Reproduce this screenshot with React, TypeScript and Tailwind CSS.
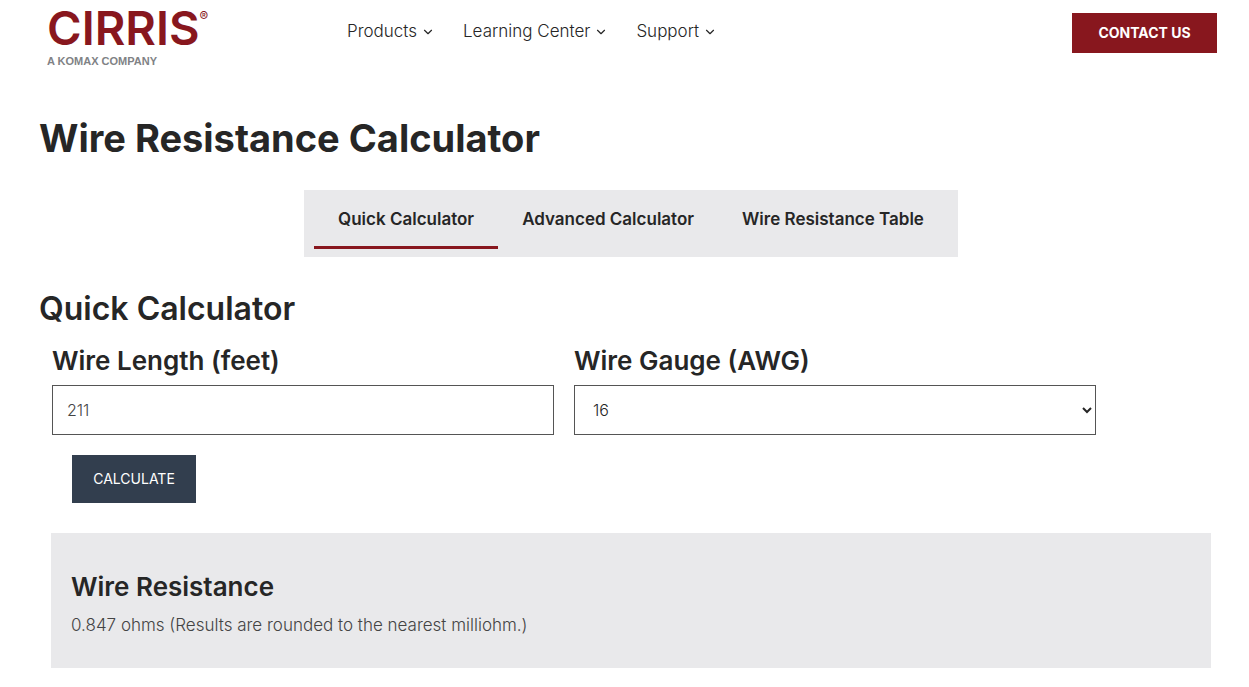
import { useState } from 'react'
import type { FormEvent } from 'react'
import { ChevronDown } from 'lucide-react'

const NAV = ['Products', 'Learning Center', 'Support']
const TABS = ['Quick Calculator', 'Advanced Calculator', 'Wire Resistance Table']
const GAUGES = [10, 12, 14, 16, 18, 20, 22, 24, 26, 28, 30]

// copper, ohms per 1000 ft at the given AWG
function ohmsPerKft(gauge: number) {
  return 4.0144 * Math.pow(10, (gauge - 16) / 10)
}

function Logo() {
  return (
    <a href="#" aria-label="Cirris, a Komax company" className="block w-[300px] shrink-0">
      <span className="flex items-start text-[#88171e]">
        <span className="text-[47px] leading-[34px] font-semibold">CIRRIS</span>
        <span className="text-[13px] leading-[10px]">®</span>
      </span>
      <span className="mt-2 block font-['Liberation_Sans',sans-serif] text-[11px] leading-4 font-bold text-[#808285]">
        A KOMAX COMPANY
      </span>
    </a>
  )
}

export default function App() {
  const [tab, setTab] = useState(TABS[0])
  const [length, setLength] = useState('211')
  const [gauge, setGauge] = useState(16)
  const [result, setResult] = useState('0.847')

  const calculate = (e: FormEvent) => {
    e.preventDefault()
    setResult(((Number(length) / 1000) * ohmsPerKft(gauge)).toFixed(3))
  }

  return (
    <div className="bg-white font-[Inter,sans-serif] text-[#262626]">
      <header className="flex items-start pt-[11px] pr-8 pl-[47px]">
        <Logo />
        <nav className="flex flex-1 gap-7 pt-2">
          {NAV.map(item => (
            <a key={item} href="#" className="flex items-center gap-1 text-[17px] leading-6 font-light whitespace-nowrap">
              {item}
              <ChevronDown size={14} strokeWidth={2} className="mt-[2px]" />
            </a>
          ))}
        </nav>
        <a href="#" className="mt-[2px] flex h-10 w-[145px] items-center justify-center bg-[#88171e] text-sm font-bold text-white">
          CONTACT US
        </a>
      </header>

      <main className="pr-[38px] pl-[39px]">
        <h1 className="mt-[45px] text-[38px] leading-[48px] font-bold">Wire Resistance Calculator</h1>

        <div className="mt-7 ml-3 flex justify-center">
          <div role="tablist" className="flex h-[67px] bg-[#e9e9eb] p-[10px]">
            {TABS.map(t => (
              <button
                key={t}
                type="button"
                role="tab"
                aria-selected={t === tab}
                onClick={() => setTab(t)}
                className={
                  t === tab
                    ? 'h-[49px] border-b-3 border-[#88171e] px-6 pb-[6px] text-[17px] font-semibold'
                    : 'h-[49px] border-b-3 border-transparent px-6 pb-[6px] text-[17px] font-semibold'
                }
              >
                {t}
              </button>
            ))}
          </div>
        </div>

        <h2 className="mt-8 text-[32px] leading-10 font-semibold">Quick Calculator</h2>

        <form onSubmit={calculate} className="mt-4 ml-[13px]">
          <div className="flex gap-5 pr-[115px]">
            <div className="flex-[502]">
              <label htmlFor="length" className="block text-[26px] leading-8 font-semibold">
                Wire Length (feet)
              </label>
              <input
                id="length"
                type="text"
                inputMode="decimal"
                value={length}
                onChange={e => setLength(e.target.value)}
                className="mt-2 h-[50px] w-full border border-[#555] px-[14px] text-base font-light text-[#444]"
              />
            </div>
            <div className="flex-[522]">
              <label htmlFor="gauge" className="block text-[26px] leading-8 font-semibold">
                Wire Gauge (AWG)
              </label>
              <select
                id="gauge"
                value={gauge}
                onChange={e => setGauge(Number(e.target.value))}
                className="mt-2 h-[50px] w-full border border-[#555] bg-white pl-[14px] text-base font-light"
              >
                {GAUGES.map(g => (
                  <option key={g} value={g}>{g}</option>
                ))}
              </select>
            </div>
          </div>
          <button type="submit" className="mt-5 ml-5 h-12 w-[124px] bg-[#323e4e] text-sm text-white">
            CALCULATE
          </button>
        </form>

        <section className="mt-[30px] ml-3 bg-[#e9e9eb] px-5 pt-[38px] pb-[31px]">
          <h3 className="text-[26px] leading-8 font-semibold">Wire Resistance</h3>
          <p className="mt-[10px] text-[17px] leading-6 font-light text-[#444]">
            {result} ohms (Results are rounded to the nearest milliohm.)
          </p>
        </section>
      </main>
    </div>
  )
}
